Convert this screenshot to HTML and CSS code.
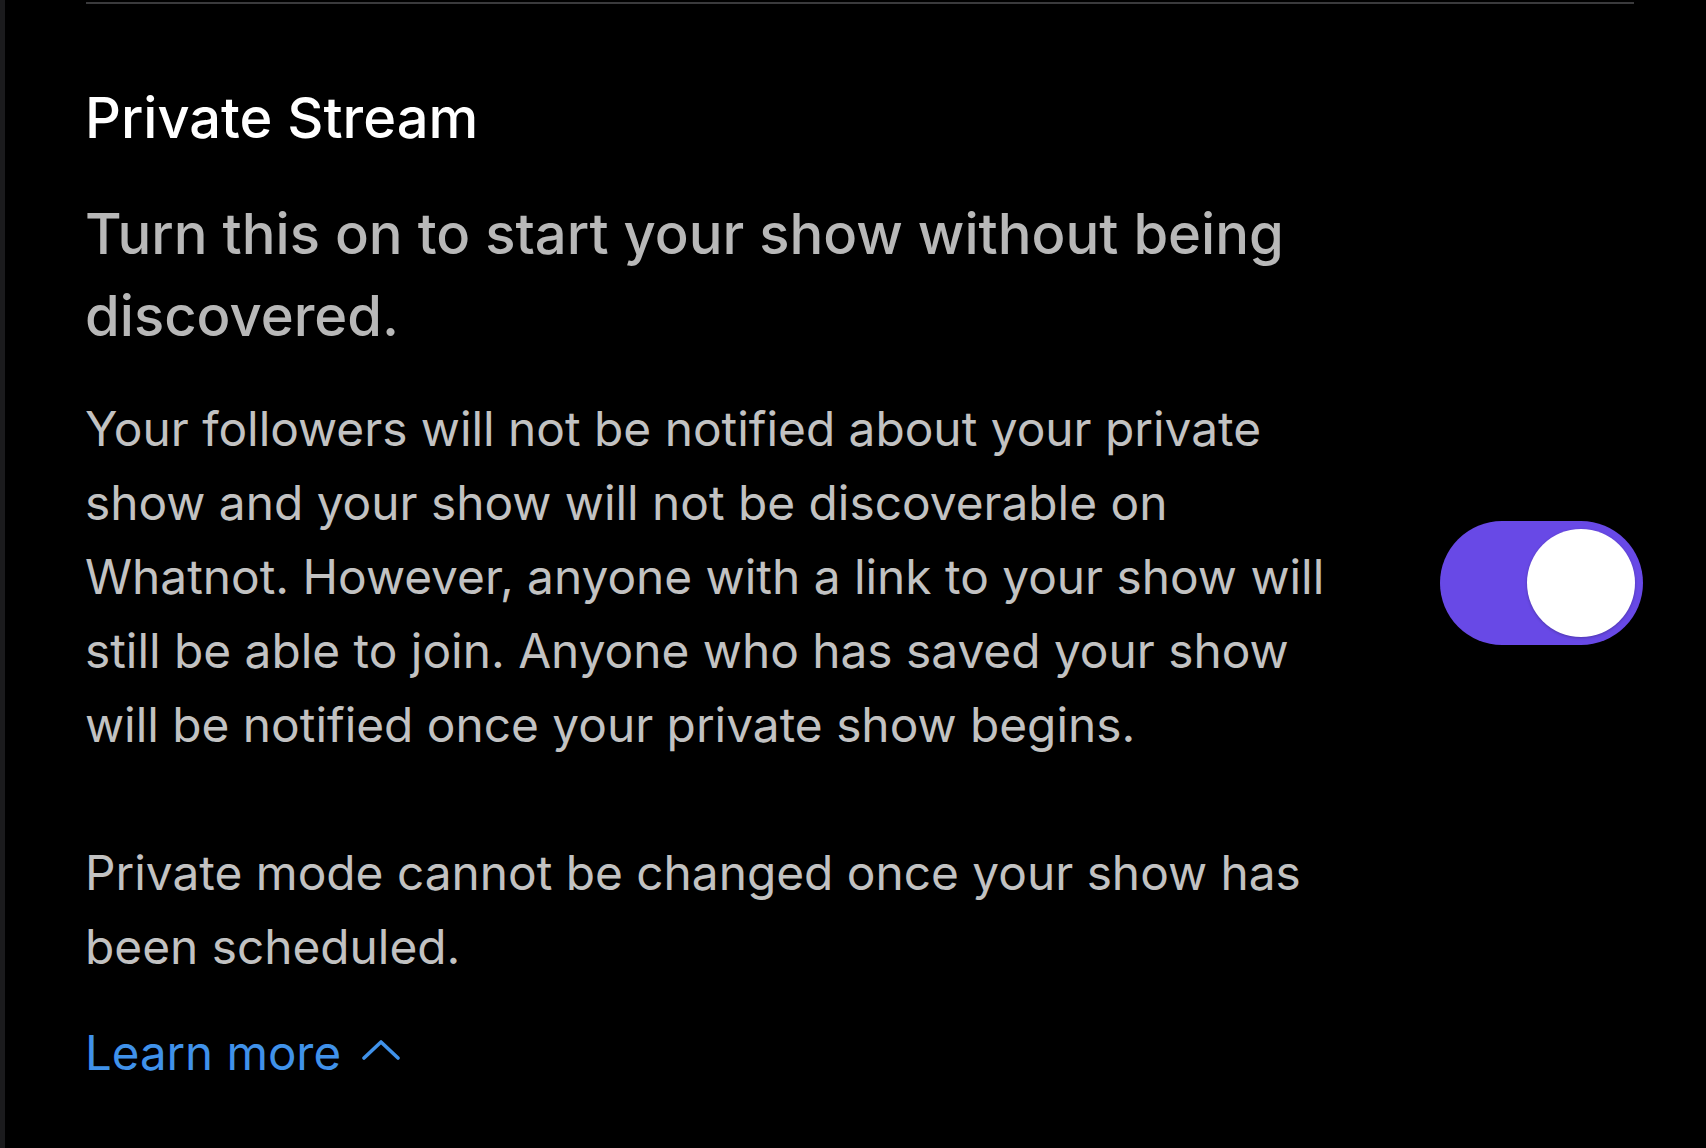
FILE: index.html
```html
<!DOCTYPE html>
<html>
<head>
    <title>Private Stream</title>
    <link rel="stylesheet" href="styles.css">
</head>
<body>
    <div class="panel">
        <div class="divider"></div>

        <!-- Private stream setting -->
        <div class="setting">
            <div class="setting-text">
                <h2 class="setting-title">Private Stream</h2>
                <p class="setting-lead">Turn this on to start your show without being discovered.</p>
                <p class="setting-desc">Your followers will not be notified about your private show and your show will not be discoverable on Whatnot. However, anyone with a link to your show will still be able to join. Anyone who has saved your show will be notified once your private show begins.<br><br>Private mode cannot be changed once your show has been scheduled.</p>
                <a class="learn-more" href="#">Learn more
                    <svg class="chevron" width="38" height="20" viewBox="0 0 38 20"><path d="M2 18 L19 2 L36 18" fill="none" stroke="currentColor" stroke-width="3.6" stroke-linecap="round" stroke-linejoin="round"/></svg>
                </a>
            </div>
            <div class="toggle on"><div class="knob"></div></div>
        </div>
    </div>
</body>
</html>
```

FILE: styles.css
```css
body { margin: 0; background: #000; font-family: Inter, "Noto Sans", sans-serif; }
.panel { min-height: 100vh; box-sizing: border-box; border-left: 5px solid #1b1b1d; padding: 2px 72px 0 80px; }
.divider { height: 2px; background: #3a3a3c; margin-left: 1px; }
.setting { display: flex; align-items: center; justify-content: space-between; padding-top: 81px; }
.setting-text { width: 1250px; }
.setting-title { margin: 0; font-size: 56px; line-height: 66px; font-weight: 500; color: #fff; }
.setting-lead { margin: 42px 0 0; font-size: 56.2px; line-height: 82px; font-weight: 500; color: #b8b8b8; }
.setting-desc { margin: 35px 0 0; font-size: 47.8px; line-height: 74px; font-weight: 400; color: #c2c2c2; }
.learn-more { display: inline-flex; align-items: center; gap: 21px; margin-top: 32px; font-size: 47.4px; line-height: 74px; color: #4092ea; text-decoration: none; }
.chevron { margin-top: -6px; }
.toggle { width: 203px; height: 124px; border-radius: 62px; background: #6849e6; box-sizing: border-box; padding: 8px; display: flex; justify-content: flex-end; margin: 0 -9px 9px 0; flex-shrink: 0; }
.knob { width: 108px; height: 108px; border-radius: 50%; background: #fff; box-shadow: 0 1px 3px rgba(0,0,0,0.25); }
```
